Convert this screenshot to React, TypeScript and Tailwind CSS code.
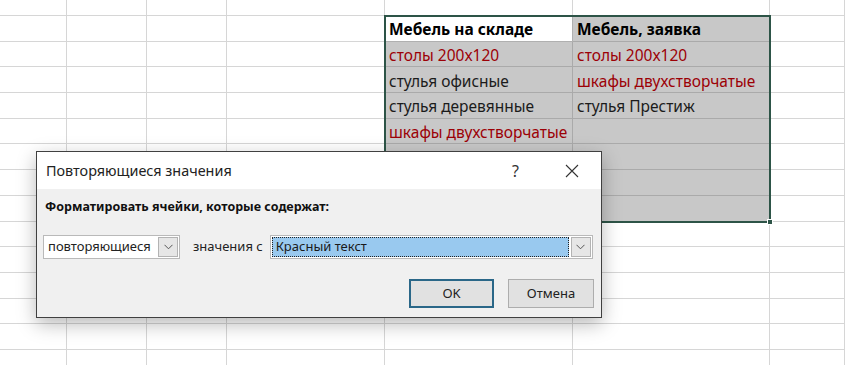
import type { ReactNode } from "react"

const RED = "text-[#9c0006]"

type Cell = { text?: string; bold?: boolean; red?: boolean; sel?: boolean; active?: boolean }

// columns: A..G visible slice, rows: partial top row + full rows down past the bottom edge
const COLS = 7
const ROWS = 15

function buildCells(): Cell[][] {
  const rows: Cell[][] = []
  for (let r = 0; r < ROWS; r++) {
    const row: Cell[] = []
    for (let c = 0; c < COLS; c++) row.push({})
    rows.push(row)
  }
  // selection E2:F9
  for (let r = 1; r <= 8; r++) {
    rows[r][4].sel = true
    rows[r][5].sel = true
  }
  rows[1][4] = { text: "Мебель на складе", bold: true, sel: true, active: true }
  rows[1][5] = { text: "Мебель, заявка", bold: true, sel: true }
  rows[2][4] = { text: "столы 200x120", red: true, sel: true }
  rows[2][5] = { text: "столы 200x120", red: true, sel: true }
  rows[3][4] = { text: "стулья офисные", sel: true }
  rows[3][5] = { text: "шкафы двухстворчатые", red: true, sel: true }
  rows[4][4] = { text: "стулья деревянные", sel: true }
  rows[4][5] = { text: "стулья Престиж", sel: true }
  rows[5][4] = { text: "шкафы двухстворчатые", red: true, sel: true }
  return rows
}

function Chevron() {
  return (
    <svg width="9" height="6" viewBox="0 0 9 6" fill="none">
      <path d="M0.5 0.8 L4.5 4.8 L8.5 0.8" stroke="#555" strokeWidth="1" />
    </svg>
  )
}

function Combo({ width, children, highlight }: { width: string; children: ReactNode; highlight?: boolean }) {
  return (
    <div className={`flex h-[24px] shrink-0 ${width} items-stretch border border-[#b9b9b9] bg-white p-[1px]`}>
      <div
        className={`flex flex-1 items-center whitespace-nowrap pl-[3px] ${
          highlight ? "border border-dotted border-[#222] bg-[#99c9ef] text-[#1a1a1a]" : "text-[#222]"
        }`}
      >
        {children}
      </div>
      <div className="ml-[2px] flex w-[20px] items-center justify-center border border-[#b3b3b3] bg-[#e6e6e6]">
        <Chevron />
      </div>
    </div>
  )
}

export default function App() {
  const cells = buildCells()
  return (
    <div className="relative h-[365px] w-[845px] overflow-hidden bg-white font-['Noto_Sans',sans-serif]">
      <div className="grid grid-cols-[67px_80px_80px_158px_188px_197px_1fr] grid-rows-[16px_repeat(14,25.7px)]">
        {cells.map((row, r) =>
          row.map((cell, c) => (
            <div
              key={`${r}-${c}`}
              className={`flex items-center overflow-visible whitespace-nowrap border-b border-r pl-[4px] pt-[3px] text-[15.5px] ${
                cell.sel
                  ? cell.active
                    ? "border-[#b0b0b0] bg-white"
                    : "border-[#aaaaaa] bg-[#c8c8c8]"
                  : "border-[#d6d6d6]"
              } ${cell.bold ? "font-bold text-black" : cell.red ? RED : "text-[#1b1b1b]"}`}
            >
              {cell.text}
            </div>
          ))
        )}
      </div>

      {/* selection outline + fill handle */}
      <div className="absolute left-[384px] top-[15px] h-[208px] w-[387px] border-2 border-[#2d5447]" />
      <div className="absolute left-[767px] top-[219px] h-[6px] w-[6px] border border-white bg-[#2d5447]" />

      {/* dialog */}
      <div className="absolute left-[36px] top-[151px] flex h-[167px] w-[566px] flex-col border border-[#404040] bg-[#f0f0f0] shadow-[0_6px_18px_rgba(0,0,0,0.28)]">
        <div className="flex h-[37px] items-center bg-white pl-[9px] pr-[22px] text-[14.4px] text-[#222]">
          <span className="flex-1">Повторяющиеся значения</span>
          <span className="mr-[46px] text-[16px] text-[#333]">?</span>
          <svg width="14" height="14" viewBox="0 0 14 14">
            <path d="M1 1 L13 13 M13 1 L1 13" stroke="#333" strokeWidth="1.1" />
          </svg>
        </div>
        <div className="flex flex-1 flex-col px-[6px] pt-[9px] text-[13px]">
          <div className="ml-[2px] text-[12.5px] font-bold text-[#111]">Форматировать ячейки, которые содержат:</div>
          <div className="mt-[18px] flex items-center">
            <Combo width="w-[137px]">повторяющиеся</Combo>
            <span className="ml-[13px] mr-[7px] shrink-0 whitespace-nowrap text-[#222]">значения с</span>
            <Combo width="w-[323px]" highlight>
              Красный текст
            </Combo>
          </div>
          <div className="mt-[20px] flex justify-end gap-[14px] pr-[1px]">
            <button className="h-[29px] w-[85px] border-2 border-[#2a6788] bg-[#e1e1e1] text-[#222]">OK</button>
            <button className="h-[29px] w-[86px] border border-[#adadad] bg-[#e1e1e1] text-[#222]">Отмена</button>
          </div>
        </div>
      </div>
    </div>
  )
}
